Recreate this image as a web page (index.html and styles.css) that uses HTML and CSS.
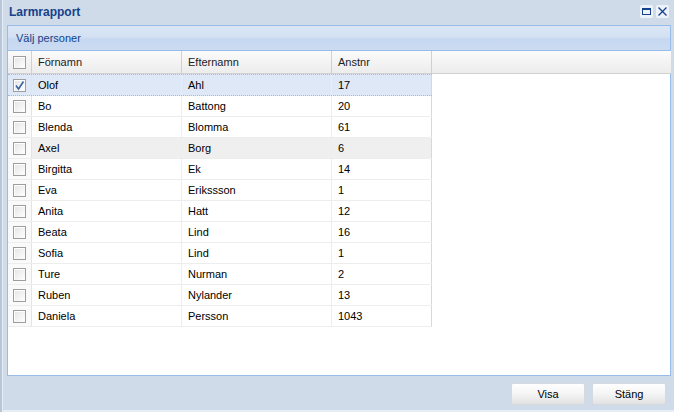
FILE: index.html
```html
<!DOCTYPE html>
<html>
<head>
<meta charset="utf-8">
<link rel="stylesheet" href="styles.css">
</head>
<body>
<div class="window">
  <div class="titlebar">
    <span class="title">Larmrapport</span>
    <div class="tools">
      <span class="tool"><svg width="11" height="11" viewBox="0 0 11 11"><rect x="1.5" y="2.5" width="8" height="6" fill="none" stroke="#15428b" stroke-width="1"/><rect x="1" y="2" width="9" height="2" fill="#15428b"/></svg></span>
      <span class="tool"><svg width="11" height="11" viewBox="0 0 11 11"><path d="M1.5 1.5 L9.5 9.5 M9.5 1.5 L1.5 9.5" stroke="#15428b" stroke-width="1.3"/></svg></span>
    </div>
  </div>
  <div class="panel">
    <div class="panel-header">Välj personer</div>
    <div class="panel-body">
      <div class="grid">
        <div class="row head">
          <div class="cell chk"><span class="box"></span></div>
          <div class="cell c1">Förnamn</div>
          <div class="cell c2">Efternamn</div>
          <div class="cell c3">Anstnr</div>
        </div>
        <div class="row selected">
          <div class="cell chk"><span class="box"><svg width="11" height="11" viewBox="0 0 11 11"><path d="M2 5.5 L4.5 9 L9.5 1.5" fill="none" stroke="#3b64a6" stroke-width="1.6"/></svg></span></div>
          <div class="cell c1">Olof</div><div class="cell c2">Ahl</div><div class="cell c3">17</div>
        </div>
        <div class="row"><div class="cell chk"><span class="box"></span></div><div class="cell c1">Bo</div><div class="cell c2">Battong</div><div class="cell c3">20</div></div>
        <div class="row"><div class="cell chk"><span class="box"></span></div><div class="cell c1">Blenda</div><div class="cell c2">Blomma</div><div class="cell c3">61</div></div>
        <div class="row hover"><div class="cell chk"><span class="box"></span></div><div class="cell c1">Axel</div><div class="cell c2">Borg</div><div class="cell c3">6</div></div>
        <div class="row"><div class="cell chk"><span class="box"></span></div><div class="cell c1">Birgitta</div><div class="cell c2">Ek</div><div class="cell c3">14</div></div>
        <div class="row"><div class="cell chk"><span class="box"></span></div><div class="cell c1">Eva</div><div class="cell c2">Erikssson</div><div class="cell c3">1</div></div>
        <div class="row"><div class="cell chk"><span class="box"></span></div><div class="cell c1">Anita</div><div class="cell c2">Hatt</div><div class="cell c3">12</div></div>
        <div class="row"><div class="cell chk"><span class="box"></span></div><div class="cell c1">Beata</div><div class="cell c2">Lind</div><div class="cell c3">16</div></div>
        <div class="row"><div class="cell chk"><span class="box"></span></div><div class="cell c1">Sofia</div><div class="cell c2">Lind</div><div class="cell c3">1</div></div>
        <div class="row"><div class="cell chk"><span class="box"></span></div><div class="cell c1">Ture</div><div class="cell c2">Nurman</div><div class="cell c3">2</div></div>
        <div class="row"><div class="cell chk"><span class="box"></span></div><div class="cell c1">Ruben</div><div class="cell c2">Nylander</div><div class="cell c3">13</div></div>
        <div class="row"><div class="cell chk"><span class="box"></span></div><div class="cell c1">Daniela</div><div class="cell c2">Persson</div><div class="cell c3">1043</div></div>
      </div>
    </div>
  </div>
  <div class="footer">
    <button class="btn">Visa</button>
    <button class="btn">Stäng</button>
  </div>
</div>
</body>
</html>
```

FILE: styles.css
```css
html, body {
  margin: 0;
  padding: 0;
}
body {
  width: 674px;
  height: 412px;
  overflow: hidden;
  font-family: "Liberation Sans", Arial, sans-serif;
  font-size: 11px;
  background: #cdd9e7;
}
.window {
  box-sizing: border-box;
  width: 674px;
  height: 412px;
  display: flex;
  flex-direction: column;
  background: #cfdbe8;
  border-left: 2px solid #b7c6d8;
  box-shadow: inset 1px -2px 0 #e6edf5;
  padding: 0 3px 0 5px;
}
.titlebar {
  height: 25px;
  display: flex;
  align-items: center;
  justify-content: space-between;
  padding-left: 2px;
  box-sizing: border-box;
}
.title {
  font-weight: bold;
  font-size: 12px;
  color: #15428b;
  margin-top: -1px;
}
.tools {
  display: flex;
  gap: 3px;
  margin-top: -2px;
  margin-right: 2px;
}
.tool {
  width: 13px;
  height: 13px;
  background: #edf2f8;
  border-radius: 2px;
  display: flex;
  align-items: center;
  justify-content: center;
}
.panel {
  flex: 1;
  display: flex;
  flex-direction: column;
  border: 1px solid #99bbe8;
  background: #fff;
}
.panel-header {
  height: 25px;
  box-sizing: border-box;
  border-bottom: 1px solid #99bbe8;
  background: linear-gradient(#dae6f5 0%, #d3e1f3 45%, #c5d8f0 55%, #cbdcf2 100%);
  color: #15428b;
  padding-left: 8px;
  display: flex;
  align-items: center;
  font-size: 11px;
}
.panel-body {
  flex: 1;
  background: #fff;
}
.grid {
  width: 424px;
}
.row {
  display: flex;
  height: 21px;
  box-sizing: border-box;
  border-bottom: 1px solid #ededed;
}
.row.head {
  height: 23px;
  background: linear-gradient(#fbfbfb, #ececec);
  border-bottom: 1px solid #d0d0d0;
  width: 663px;
}
.row.head .cell {
  border-right-color: #d0d0d0;
  color: #222;
}
.row.selected {
  background: #dfe8f6;
  border-top: 1px dotted #a3bae9;
  border-bottom: 1px dotted #a3bae9;
  height: 22px;
}
.row.hover {
  background: #efefef;
}
.cell {
  box-sizing: border-box;
  border-right: 1px solid #ededed;
  display: flex;
  align-items: center;
  padding-left: 6px;
  color: #000;
  white-space: nowrap;
}
.cell.chk {
  width: 24px;
  padding-left: 5px;
  background: #fafafa;
  border-right-color: #e4e4e4;
}
.row.head .cell.chk,
.row.selected .cell.chk {
  background: transparent;
}
.c1 { width: 150px; }
.c2 { width: 150px; }
.c3 { width: 100px; border-right-color: #d8d8d8; }
.box {
  box-sizing: border-box;
  width: 13px;
  height: 13px;
  border: 1px solid #9d9d9d;
  background: linear-gradient(135deg, #e4e4e4, #ffffff);
  box-shadow: inset 1px 1px 0 #fff;
  display: flex;
  align-items: center;
  justify-content: center;
}
.footer {
  height: 36px;
  display: flex;
  justify-content: flex-end;
  align-items: flex-start;
  gap: 7px;
  padding-top: 7px;
  padding-right: 5px;
  box-sizing: border-box;
}
.btn {
  width: 74px;
  height: 22px;
  box-sizing: border-box;
  border: 1px solid #d4d9df;
  border-radius: 2px;
  background: linear-gradient(#ffffff 0%, #f4f4f4 50%, #e2e2e2 100%);
  font-family: "Liberation Sans", Arial, sans-serif;
  font-size: 11px;
  color: #000;
  padding: 0;
}
```
